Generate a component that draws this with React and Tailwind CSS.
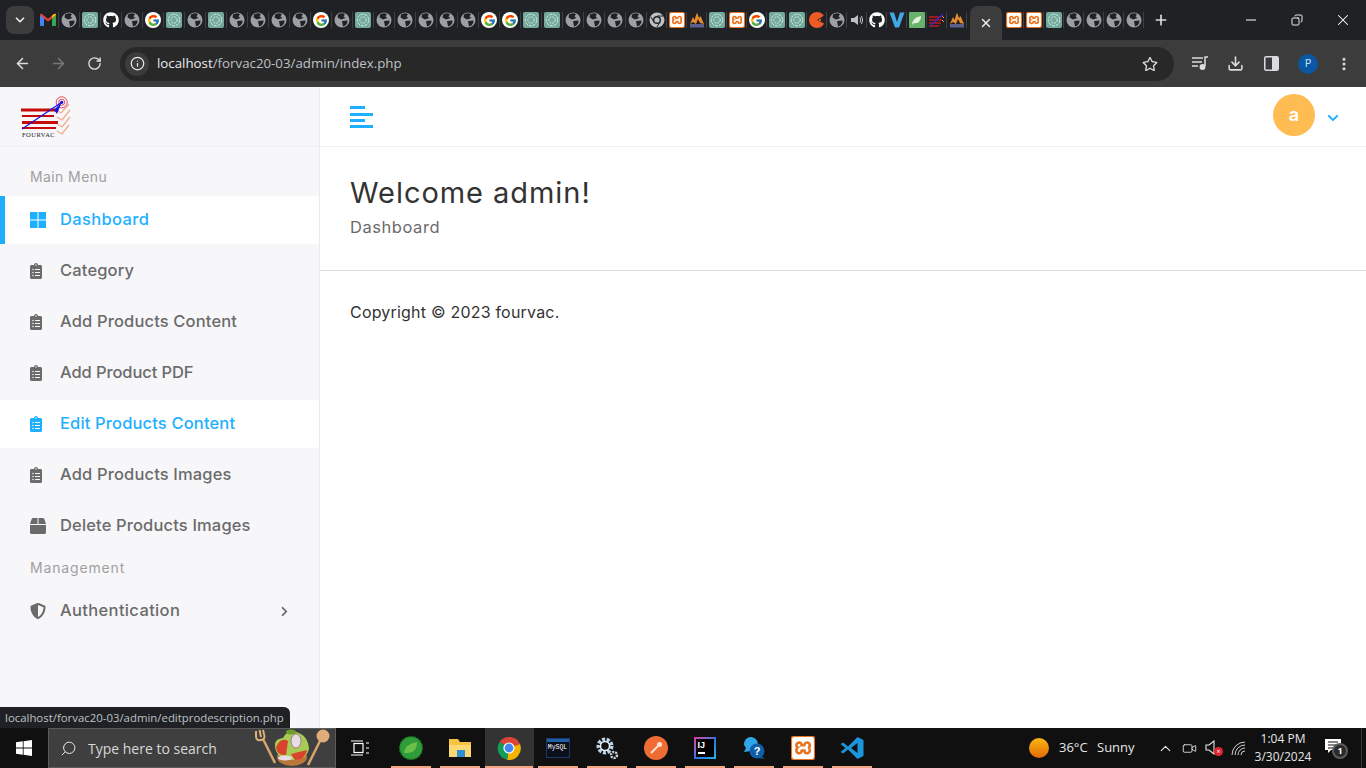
import { FaClipboardList, FaBox, FaShieldAlt, FaChevronRight, FaChevronDown, FaGithub, FaRegStar } from 'react-icons/fa';
import { FcGoogle } from 'react-icons/fc';
import { SiXampp } from 'react-icons/si';
import { ChevronDown, X, ArrowLeft, ArrowRight, RotateCw, Info, Plus, Minus, Copy, Download, MoreVertical, Search, ChevronUp, Video } from 'lucide-react';

// Tab strip favicons
function Globe() {
  return (
    <svg width="16" height="16" viewBox="0 0 16 16">
      <circle cx="8" cy="8" r="7.5" fill="#9aa0a6" />
      <path d="M4 2.5 Q8 0.5 11 2 L9.5 4.5 L11.5 6 L7 7.5 L3.5 5.5 Z M8 9 L13.5 8.5 Q14 11 11.5 13.5 L9 14.5 Z" fill="#202124" />
    </svg>
  );
}

function Gpt() {
  return (
    <div className="w-4 h-4 rounded-[2px] bg-[#74aa9c] flex items-center justify-center">
      <svg width="14" height="14" viewBox="0 0 14 14" fill="none" stroke="#d6ebe5" strokeWidth="1">
        <circle cx="7" cy="7" r="5.8" strokeDasharray="3 1" />
        <circle cx="7" cy="7" r="3.2" strokeDasharray="2 1" />
      </svg>
    </div>
  );
}

function Google() {
  return (
    <div className="w-4 h-4 rounded-full bg-white flex items-center justify-center">
      <FcGoogle size={13} />
    </div>
  );
}

function GithubIcon() {
  return <FaGithub size={16} className="text-white" />;
}

function Gmail() {
  return (
    <svg width="16" height="14" viewBox="0 0 16 14">
      <path d="M0 2 L4 4.5 V13 H1 Q0 13 0 12 Z" fill="#4285f4" />
      <path d="M12 4.5 L16 2 V12 Q16 13 15 13 H12 Z" fill="#34a853" />
      <path d="M0 2 Q0 0 2 1 L8 6 L14 1 Q16 0 16 2 L12 5.5 L8 8.5 L4 5.5 Z" fill="#ea4335" />
      <path d="M12 2.6 L14 1 Q16 0 16 2 L12 5 Z" fill="#fbbc04" />
    </svg>
  );
}

function Xampp({ size = 16 }) {
  return (
    <div className="rounded-[2px] bg-[#e8741f] flex items-center justify-center" style={{ width: size, height: size }}>
      <SiXampp size={size - 2} className="text-white" />
    </div>
  );
}

function Matlab() {
  return (
    <svg width="16" height="16" viewBox="0 0 16 16">
      <path d="M1 12 L4 5 L5.5 8 L8 0.5 L10 6 L11.5 4 L15 12 L11 11 L9 7 L7 12 L4 10 Z" fill="#e98a2c" />
      <rect x="1" y="12" width="14" height="3.5" fill="#5a5f8c" />
    </svg>
  );
}

function ChromeGrey() {
  return (
    <svg width="16" height="16" viewBox="0 0 16 16">
      <circle cx="8" cy="8" r="7.5" fill="#bdc1c6" />
      <circle cx="8" cy="8" r="4" fill="#202124" />
      <circle cx="8" cy="8" r="2.6" fill="#bdc1c6" />
      <path d="M8 4 L14.5 4 M5 10.5 L2 5 M11 10 L8 15" stroke="#202124" strokeWidth="1" />
    </svg>
  );
}

function PostmanTab() {
  return (
    <svg width="16" height="16" viewBox="0 0 16 16">
      <circle cx="8" cy="8" r="8" fill="#ef5b25" />
      <path d="M16 3 L8 8 L16 12 Z" fill="#202124" />
      <circle cx="11" cy="8" r="1.2" fill="#ef5b25" />
    </svg>
  );
}

function Speaker() {
  return (
    <svg width="14" height="14" viewBox="0 0 14 14" fill="#bdc1c6">
      <path d="M1 5 H4 L8 2 V12 L4 9 H1 Z" />
      <path d="M10 4.5 Q11.5 7 10 9.5 M11.5 3 Q13.8 7 11.5 11" fill="none" stroke="#bdc1c6" strokeWidth="1" />
    </svg>
  );
}

function VTab() {
  return (
    <svg width="16" height="16" viewBox="0 0 16 16">
      <path d="M0.5 0.5 H5 L8 10 L11 0.5 H15.5 L10 15.5 H6 Z" fill="#3fa9e8" />
    </svg>
  );
}

function LeafTab() {
  return (
    <div className="w-4 h-4 rounded-[1px] bg-[#68b36b] flex items-center justify-center">
      <svg width="11" height="11" viewBox="0 0 12 12">
        <path d="M1 11 Q2 2 11 1 Q11 9 3 9 Z" fill="#e2f2df" />
      </svg>
    </div>
  );
}

function MultiTab() {
  return (
    <svg width="16" height="16" viewBox="0 0 16 16">
      <path d="M0 5 H12 M0 8 H13 M0 11 H12 M0 14 H10" stroke="#c4161c" strokeWidth="1.6" />
      <path d="M1 14 L14 2" stroke="#2b2bd6" strokeWidth="1.2" />
      <path d="M13 4 L15 6 M13 8 L15 10" stroke="#f0906a" strokeWidth="1" />
    </svg>
  );
}

// left group of tabs, in strip order
const tabsA = [
  [Gmail, 21], [Globe, 21], [Gpt, 21], [GithubIcon, 21], [Globe, 21], [Google, 21], [Gpt, 21], [Globe, 21], [Gpt, 21],
  [Globe, 21], [Globe, 21], [Globe, 21], [Globe, 21], [Google, 21], [Globe, 21], [Gpt, 21], [Globe, 21], [Globe, 21],
  [Globe, 21], [Globe, 21], [Globe, 21], [Google, 21], [Google, 21], [Gpt, 21], [Gpt, 21], [Globe, 21], [Globe, 21],
  [Globe, 21], [Globe, 21], [ChromeGrey, 20], [Xampp, 20], [Matlab, 20], [Gpt, 20], [Xampp, 20], [Google, 20], [Gpt, 20],
  [Gpt, 20], [PostmanTab, 20], [Globe, 20], [Speaker, 20], [GithubIcon, 20], [VTab, 20], [LeafTab, 20], [MultiTab, 20], [Matlab, 20],
];
const tabsB = [Xampp, Xampp, Gpt, Globe, Globe, Globe, Globe];

function TabStrip() {
  return (
    <div className="h-10 bg-[#202124] flex items-center shrink-0">
      <div className="ml-[6px] w-[28px] h-[28px] rounded-lg bg-[#3c3c3c] flex items-center justify-center text-[#e8eaed]">
        <ChevronDown size={14} strokeWidth={3} />
      </div>
      <div className="ml-[4px] flex items-center">
        {tabsA.map(([Icon, w], i) => (
          <div key={i} style={{ width: w }} className="h-4 flex items-center justify-center border-r border-[#3c4043] shrink-0">
            <Icon />
          </div>
        ))}
      </div>
      <div className="self-end h-[34px] w-[32px] ml-[3px] rounded-t-lg bg-[#3c3c3c] flex items-center justify-center text-[#e8eaed]">
        <X size={14} strokeWidth={2.5} />
      </div>
      <div className="ml-[2px] flex items-center">
        {tabsB.map((Icon, i) => (
          <div key={i} className="w-5 h-4 flex items-center justify-center border-r border-[#3c4043] shrink-0">
            <Icon />
          </div>
        ))}
      </div>
      <Plus size={16} strokeWidth={2.5} className="ml-[9px] text-[#dadce0]" />
      <div className="ml-auto flex items-center text-white">
        <div className="w-[46px] flex justify-center"><Minus size={16} strokeWidth={1.5} /></div>
        <div className="w-[46px] flex justify-center"><Copy size={12} strokeWidth={1.8} className="-scale-x-100" /></div>
        <div className="w-[46px] flex justify-center"><X size={18} strokeWidth={1.4} /></div>
      </div>
    </div>
  );
}

function Toolbar() {
  return (
    <div className="h-[47px] bg-[#3c3c3c] flex items-center shrink-0 text-[#dadce0] font-['Open_Sans',sans-serif]">
      <ArrowLeft size={17} strokeWidth={2.2} className="ml-[14px]" />
      <ArrowRight size={17} strokeWidth={2.2} className="ml-[19px] text-[#75777a]" />
      <RotateCw size={15} strokeWidth={2.2} className="ml-[20px]" />
      <div className="ml-[18px] w-[1054px] h-[34px] rounded-full bg-[#282828] flex items-center">
        <div className="ml-[5px] w-[24px] h-[24px] rounded-full bg-[#3c3c3c] flex items-center justify-center text-[#e8eaed]">
          <Info size={15} strokeWidth={2} />
        </div>
        <span className="ml-[8px] text-[13.3px] text-[#bdc1c6]"><span className="text-[#e8eaed]">localhost</span>/forvac20-03/admin/index.php</span>
        <FaRegStar size={16} className="ml-auto mr-[16px] text-[#dadce0]" />
      </div>
      <svg width="17" height="15" viewBox="0 0 17 15" fill="none" stroke="#dadce0" strokeWidth="1.5" className="ml-[18px]">
        <path d="M0 2 H11 M0 6 H10 M0 10 H6" />
        <path d="M13 10 V1 H16" />
        <circle cx="10.5" cy="11" r="2.2" fill="#dadce0" />
      </svg>
      <Download size={17} strokeWidth={2.2} className="ml-[18px]" />
      <svg width="15" height="15" viewBox="0 0 15 15" className="ml-[20px]">
        <rect x="0.75" y="0.75" width="13.5" height="13.5" rx="1.5" fill="none" stroke="#dadce0" strokeWidth="1.5" />
        <rect x="8" y="1" width="6" height="13" fill="#dadce0" />
      </svg>
      <div className="ml-[19px] w-5 h-5 rounded-full bg-[#0b57a4] flex items-center justify-center text-[11px] text-[#c2e7ff]">P</div>
      <MoreVertical size={16} strokeWidth={2.5} className="ml-[18px]" />
    </div>
  );
}

function WindowsSquares() {
  return (
    <svg width="16" height="16" viewBox="0 0 16 16" fill="#1eb0ff">
      <rect x="0" y="0" width="7.5" height="7.5" />
      <rect x="8.5" y="0" width="7.5" height="7.5" />
      <rect x="0" y="8.5" width="7.5" height="7.5" />
      <rect x="8.5" y="8.5" width="7.5" height="7.5" />
    </svg>
  );
}

// The clipboard glyph is narrower than its box, so it sits 2px to the left
const clipboard = <FaClipboardList size={16} className="ml-[-2px]" />;

const menuItems = [
  { label: 'Category', icon: clipboard },
  { label: 'Add Products Content', icon: clipboard },
  { label: 'Add Product PDF', icon: clipboard, tracking: 'tracking-[-0.1px]' },
  { label: 'Edit Products Content', icon: clipboard, highlight: true },
  { label: 'Add Products Images', icon: clipboard },
  { label: 'Delete Products Images', icon: <FaBox size={16} /> },
];

function MenuItem({ item }) {
  return (
    <div className={`h-[48px] mb-[3px] pl-[30px] flex items-center ${item.highlight ? 'bg-white text-[#1eb0ff]' : 'text-[#6b6b6b]'}`}>
      <span className="w-[16px] flex justify-start">{item.icon}</span>
      <span className={`ml-[14px] mt-[-2px] text-[16.5px] font-[450] ${item.tracking || 'tracking-[0.15px]'}`}>{item.label}</span>
    </div>
  );
}

function Logo() {
  return (
    <svg width="52" height="42" viewBox="0 0 52 42">
      <path d="M1 14 H36 M2 26.5 H38" stroke="#c90a0a" strokeWidth="3" />
      <path d="M2 20 H34 M2 32 H36" stroke="#c90a0a" strokeWidth="2.2" />
      <path d="M36 14 L41 17 L49 8 M37 21 L42 24 L50 14 M37 28 L42 31 L50 21 M37 35 L42 38 L49 29" fill="none" stroke="#f4a98a" strokeWidth="1.3" />
      <circle cx="41.7" cy="6.3" r="5.5" fill="none" stroke="#e0455a" strokeWidth="1" />
      <circle cx="41.7" cy="6.3" r="3" fill="none" stroke="#e0455a" strokeWidth="1" />
      <circle cx="41.7" cy="6.3" r="1.6" fill="#1414e0" />
      <path d="M2 33 L41.7 6.3" stroke="#1414e0" strokeWidth="1.2" />
      <path d="M34 14 L41.7 6.3 L37 18 Z" fill="#1414e0" />
      <text x="2" y="40.5" fontSize="6.5" fontFamily="Liberation Serif, serif" fill="#222" letterSpacing="0.5">FOURVAC</text>
    </svg>
  );
}

function Sidebar() {
  return (
    <div className="w-[320px] shrink-0 bg-[#f7f7fa] border-r border-[#eaeaee]">
      <div className="h-[60px] border-b border-[#eeeef1] pl-[20px] flex items-center">
        <Logo />
      </div>
      <div className="pl-[30px] pt-[21px] h-[49px] text-[14px] leading-[18px] tracking-[0.4px] text-[#a0a0a0]">Main Menu</div>
      <div className="h-[48px] mb-[3px] pl-[25px] border-l-[5px] border-[#1eb0ff] bg-white text-[#1eb0ff] flex items-center">
        <WindowsSquares />
        <span className="ml-[14px] mt-[-2px] text-[16.5px] font-[450] tracking-[0.35px]">Dashboard</span>
      </div>
      {menuItems.map(item => <MenuItem key={item.label} item={item} />)}
      <div className="pl-[30px] pt-[6px] h-[34px] text-[14px] leading-[18px] tracking-[0.85px] text-[#a0a0a0]">Management</div>
      <div className="h-[48px] pl-[30px] pr-[29px] flex items-center text-[#6b6b6b]">
        <FaShieldAlt size={16} />
        <span className="ml-[14px] mt-[-2px] text-[16.5px] font-[450] tracking-[0.35px]">Authentication</span>
        <FaChevronRight size={11} className="ml-auto" />
      </div>
    </div>
  );
}

function Header() {
  return (
    <div className="h-[60px] border-b border-[#f0f0f0] flex items-center pl-[30px] pr-[27px]">
      <svg width="24" height="24" viewBox="0 0 24 24" fill="#1eb0ff">
        <rect x="0" y="1" width="15" height="3" />
        <rect x="0" y="8" width="23" height="3" />
        <rect x="0" y="14" width="15" height="3" />
        <rect x="0" y="20" width="23" height="3" />
      </svg>
      <div className="ml-auto mt-[-4px] w-[42px] h-[42px] rounded-full bg-[#ffbc53] flex items-center justify-center text-white text-[18px] font-semibold">a</div>
      <FaChevronDown size={12} className="ml-[12px] mt-[2px] text-[#1eb0ff]" />
    </div>
  );
}

function Content() {
  return (
    <div className="flex-1 bg-white">
      <Header />
      <div className="px-[30px] pt-[27px] h-[124px] border-b border-[#dddddd]">
        <h1 className="text-[29px] leading-[38px] font-normal tracking-[0.95px] text-[#333333]">Welcome admin!</h1>
        <div className="mt-[5px] text-[16.5px] leading-[20px] tracking-[0.55px] text-[#6b6b6b]">Dashboard</div>
      </div>
      <div className="px-[30px] pt-[31px] text-[16px] leading-[20px] tracking-[0.2px] text-[#333333]">Copyright © 2023 fourvac.</div>
    </div>
  );
}

// Taskbar artwork
function Salad() {
  return (
    <svg width="76" height="38" viewBox="0 0 76 38">
      <path d="M8 10 L20 34" stroke="#d9a66c" strokeWidth="2.5" />
      <path d="M1 2 V7 Q1 12 6 11 Q11 10 9 5 L8 1 M4.5 1 L6 8" fill="none" stroke="#e0b078" strokeWidth="2" />
      <path d="M66 10 L53 36" stroke="#d9a66c" strokeWidth="2.5" />
      <circle cx="68" cy="7" r="6.5" fill="#e0ad78" />
      <ellipse cx="37" cy="28" rx="15" ry="9" fill="#b9773c" />
      <path d="M21 22 Q17 10 28 9 Q32 1 41 3 Q53 6 54 20 Q52 30 40 31 Q25 32 21 22 Z" fill="#a8cb55" />
      <path d="M21 18 Q26 8 33 12 L31 26 Q22 27 21 18 Z" fill="#d9432c" />
      <path d="M36 25 L52 21 Q50 31 40 31 Z" fill="#d9432c" />
      <ellipse cx="41" cy="12" rx="5" ry="7" fill="#e9dce6" stroke="#8d5a8a" strokeWidth="0.7" />
      <ellipse cx="30" cy="29" rx="7" ry="2.5" fill="#e9dce6" />
      <ellipse cx="36" cy="3" rx="5" ry="2.5" fill="#6f9e2e" />
    </svg>
  );
}

function SpringApp() {
  return (
    <svg width="24" height="24" viewBox="0 0 24 24">
      <circle cx="12" cy="12" r="11.5" fill="#2f9e3a" />
      <circle cx="12" cy="12" r="11.5" fill="none" stroke="#16651f" strokeWidth="1.5" strokeDasharray="2 2" />
      <path d="M5 17 Q6 8 18 6 Q18 17 9 17 Z" fill="#6cc04a" />
    </svg>
  );
}

function FolderApp() {
  return (
    <svg width="24" height="24" viewBox="0 0 24 24">
      <path d="M1 3 H10 L12 6 H23 V21 H1 Z" fill="#f5c242" />
      <rect x="1" y="9" width="22" height="12" fill="#fbd871" />
      <rect x="9" y="14" width="8" height="7" fill="#2d8fd5" />
    </svg>
  );
}

function ChromeApp() {
  return (
    <svg width="24" height="24" viewBox="0 0 24 24">
      <path d="M12 12 L2.5 6 A11.8 11.8 0 0 1 23 8 Z" fill="#db4437" />
      <path d="M12 12 L23 8 A11.8 11.8 0 0 1 10 23.8 Z" fill="#f4b400" />
      <path d="M12 12 L10 23.8 A11.8 11.8 0 0 1 2.5 6 Z" fill="#0f9d58" />
      <circle cx="12" cy="12" r="5.6" fill="#fff" />
      <circle cx="12" cy="12" r="4.4" fill="#4285f4" />
    </svg>
  );
}

function MysqlApp() {
  return (
    <div className="w-[24px] h-[20px] bg-[#0b0f1c] border border-[#1a3a6a] flex flex-col">
      <div className="h-[3px] bg-[#1f5fa8]" />
      <div className="text-[6.5px] leading-[12px] text-white font-['Liberation_Mono',monospace] text-center">MySQL</div>
    </div>
  );
}

function GearsApp() {
  return (
    <svg width="24" height="24" viewBox="0 0 24 24" fill="none">
      <circle cx="10" cy="10" r="6.5" stroke="#bcd3e6" strokeWidth="4" strokeDasharray="3 1.5" />
      <circle cx="10" cy="10" r="4.5" stroke="#e8eef4" strokeWidth="1.5" />
      <circle cx="19" cy="19" r="3" stroke="#c9d4de" strokeWidth="2.4" strokeDasharray="2 1" />
    </svg>
  );
}

function PostmanApp() {
  return (
    <div className="w-[24px] h-[24px] rounded-full bg-[#ef6c35] flex items-center justify-center">
      <svg width="14" height="14" viewBox="0 0 14 14">
        <path d="M2 12 L9 5" stroke="#ffe3d6" strokeWidth="2" />
        <circle cx="10.5" cy="3.5" r="2.5" fill="#ffe3d6" />
      </svg>
    </div>
  );
}

function IdeaApp() {
  return (
    <div className="w-[22px] h-[22px] bg-gradient-to-br from-[#e0279c] via-[#2f6fe0] to-[#18b7e8] p-[2px]">
      <div className="w-full h-full bg-black text-white text-[9px] leading-[10px] font-bold font-['Liberation_Sans',sans-serif] pl-[2px] pt-[1px]">
        IJ
        <div className="mt-[2px] w-[7px] h-[1.5px] bg-white" />
      </div>
    </div>
  );
}

function HelpApp() {
  return (
    <svg width="24" height="24" viewBox="0 0 24 24">
      <path d="M2 9 A7 7 0 1 1 9 15 L2 16 L4 12 Z" fill="#2ea6e8" />
      <circle cx="15" cy="15" r="7.5" fill="#0e5fa8" />
      <path d="M19 20 L23 23 L16 22 Z" fill="#0e5fa8" />
      <text x="15" y="19" textAnchor="middle" fontSize="11" fontWeight="700" fontFamily="Liberation Sans, sans-serif" fill="#fff">?</text>
    </svg>
  );
}

function VscodeApp() {
  return (
    <svg width="24" height="24" viewBox="0 0 24 24">
      <path d="M17.5 1 L23.5 4 V20 L17.5 23 L8 13.5 L3 17.5 L0.5 16 L5.5 12 L0.5 8 L3 6.5 L8 10.5 Z M17.5 7 L11 12 L17.5 17 Z" fill="#1c95dd" fillRule="evenodd" />
    </svg>
  );
}

const taskApps = [
  { id: 'spring', icon: <SpringApp /> },
  { id: 'folder', icon: <FolderApp /> },
  { id: 'chrome', icon: <ChromeApp />, active: true },
  { id: 'mysql', icon: <MysqlApp /> },
  { id: 'gears', icon: <GearsApp /> },
  { id: 'postman', icon: <PostmanApp /> },
  { id: 'idea', icon: <IdeaApp /> },
  { id: 'help', icon: <HelpApp /> },
  { id: 'xampp', icon: <Xampp size={24} /> },
  { id: 'vscode', icon: <VscodeApp /> },
];

function Taskbar() {
  return (
    <div className="h-10 bg-[#101010] flex items-stretch shrink-0 text-[#e6e6e6] font-['Open_Sans',sans-serif]">
      <div className="w-[48px] flex items-center justify-center">
        <svg width="16" height="16" viewBox="0 0 16 16" fill="#fff">
          <path d="M0 2.3 L6.8 1.3 V7.6 H0 Z M7.6 1.2 L16 0 V7.6 H7.6 Z M0 8.4 H6.8 V14.7 L0 13.7 Z M7.6 8.4 H16 V16 L7.6 14.8 Z" />
        </svg>
      </div>
      <div className="w-[288px] bg-[#3f3f3f] border border-[#5c5c5c] flex items-center relative overflow-hidden">
        <Search size={17} strokeWidth={1.4} className="ml-[11px] -scale-x-100" />
        <span className="ml-[11px] text-[14px] text-[#d8d8d8]">Type here to search</span>
        <div className="absolute right-[4px] top-0"><Salad /></div>
      </div>
      <div className="w-[51px] pr-[4px] flex items-center justify-center">
        <svg width="18" height="16" viewBox="0 0 18 16" fill="none" stroke="#fff" strokeWidth="1.2">
          <rect x="3" y="3.5" width="9" height="9" />
          <path d="M0 1 H12 M0 15 H12 M15 3 H18 M15 8 H18 M15 13 H18" />
        </svg>
      </div>
      {taskApps.map(app => (
        <div key={app.id} className={`w-[49px] pr-[2px] relative flex items-center justify-center ${app.active ? 'bg-[#333333]' : ''}`}>
          {app.icon}
          <div className={`absolute bottom-0 h-[2px] bg-[#f4a57f] ${app.active ? 'left-0 w-[48px]' : 'left-[4px] w-[40px]'}`} />
        </div>
      ))}
      <div className="ml-auto flex items-center">
        <div className="w-5 h-5 rounded-full bg-gradient-to-b from-[#fbb612] to-[#e06a06]" />
        <span className="ml-[10px] w-[29px] text-[13px] whitespace-nowrap">36°C</span>
        <span className="ml-[9px] w-[38px] text-[13px]">Sunny</span>
        <ChevronUp size={17} strokeWidth={1.5} className="ml-[22px]" />
        <Video size={15} strokeWidth={1.4} className="ml-[8px]" />
        <div className="relative ml-[8px] w-[18px] h-[16px]">
          <svg width="11" height="15" viewBox="0 0 11 15" fill="none" stroke="#e6e6e6" strokeWidth="1.1">
            <path d="M1 5 H4 L9 1 V14 L4 10 H1 Z" />
          </svg>
          <span className="absolute right-0 bottom-0 w-[9px] h-[9px] rounded-full bg-[#e0232e] flex items-center justify-center text-[7px] leading-none text-white">×</span>
        </div>
        <svg width="16" height="15" viewBox="0 0 16 15" fill="none" stroke="#d0d0d0" strokeWidth="1" className="ml-[8px]">
          <path d="M1 14 A13 13 0 0 1 14 1 M4 14 A10 10 0 0 1 14 4 M7 14 A7 7 0 0 1 14 7 M10 14 A4 4 0 0 1 14 10" />
        </svg>
        <div className="ml-[3px] w-[66px] text-center text-[12px] leading-[18px]">
          <div>1:04 PM</div>
          <div>3/30/2024</div>
        </div>
        <div className="relative ml-[9px] w-[20px] h-[20px]">
          <svg width="16" height="16" viewBox="0 0 16 16" className="mt-[1px]">
            <path d="M0 0 H16 V11 H6 L3 14 V11 H0 Z" fill="#fff" />
            <path d="M3 3 H13 M3 6 H13 M3 9 H10" stroke="#101010" strokeWidth="1" />
          </svg>
          <span className="absolute left-[7px] top-[5px] w-[16px] h-[16px] rounded-full bg-[#2a2a2a] border-2 border-[#5c5c5c] flex items-center justify-center text-[9px] font-bold text-white">1</span>
        </div>
        <div className="ml-[16px] w-[5px] self-stretch border-l border-[#3a3a3a]" />
      </div>
    </div>
  );
}

export default function App() {
  return (
    <div className="w-[1366px] h-[768px] overflow-hidden flex flex-col relative font-[Inter,sans-serif]">
      <TabStrip />
      <Toolbar />
      <div className="flex-1 flex min-h-0">
        <Sidebar />
        <Content />
      </div>
      <Taskbar />
      {/* Link hover status bubble */}
      <div className="absolute left-0 bottom-[40px] h-[21px] w-[290px] rounded-tr-md bg-[#202124] pl-[5px] text-[11.4px] leading-[21px] text-[#bdc1c6] font-['Open_Sans',sans-serif] whitespace-nowrap">
        localhost/forvac20-03/admin/editprodescription.php
      </div>
    </div>
  );
}
